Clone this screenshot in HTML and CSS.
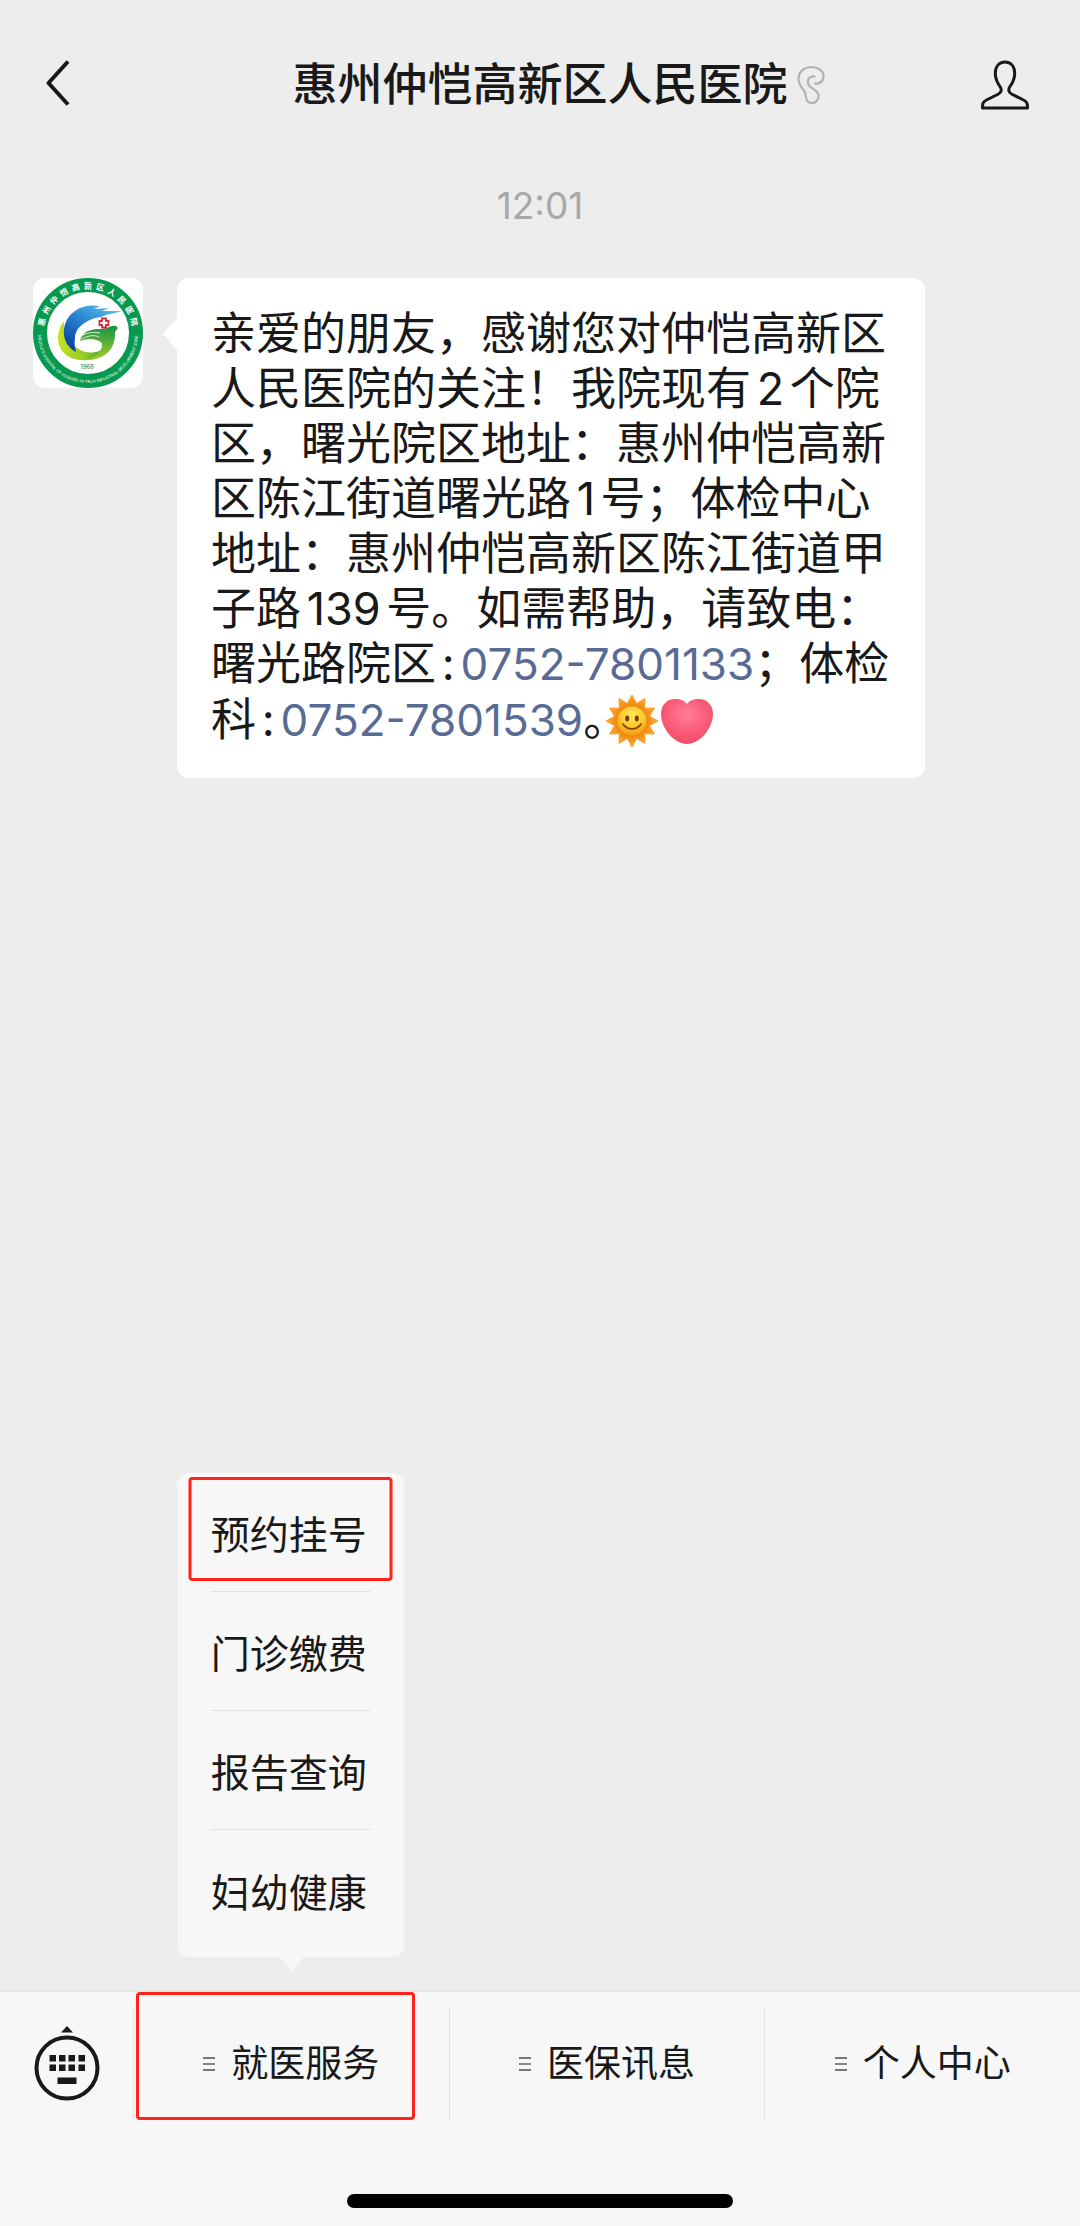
FILE: index.html
```
<!DOCTYPE html>
<html lang="zh-CN">
<head>
    <meta charset="UTF-8">
    <meta name="viewport" content="width=device-width, initial-scale=1.0">
    <title>惠州仲恺高新区人民医院</title>
    <link rel="stylesheet" href="styles.css">
</head>
<body>

<header class="header">
    <div class="header-left">
        <button class="icon-btn" aria-label="返回">
            <svg width="24" height="48" viewBox="0 0 24 48" fill="none" stroke="#191919" stroke-width="4">
                <path d="M22 2.500L2.500 24L22 45.500" stroke-linejoin="round"/>
            </svg>
        </button>
    </div>
    <h1 class="title">惠州仲恺高新区人民医院</h1>
    <div class="header-right">
        <svg width="28" height="40" viewBox="0 0 28 40" fill="none" stroke="#b2b2b2" stroke-width="2.200" stroke-linecap="round">
            <path d="M18 18.500C22 19 26.500 17 26.500 11.500C26.500 5 20.500 2 14.500 2C7 2 1.500 7 1.500 14C1.500 20 5.500 23 7.500 26.500C9.500 30.500 8 38 14.500 38C19.500 38 22 34 21.500 30C21 25 13.500 24 11.500 19.500C9.500 15 12.500 10.500 17.500 11.500"/>
        </svg>
        <button class="icon-btn" aria-label="账号主页">
            <svg width="50" height="50" viewBox="0 0 50 50" fill="none" stroke="#191919" stroke-width="3" stroke-linejoin="round">
                <path d="M25 2C18.500 2 15.300 7 15.300 13.500C15.300 19 17.500 23 20 26.500C22 29.500 21.500 32.500 18.500 34L6.500 40C3 41.800 2.500 43.500 2.500 48L47.500 48C47.500 43.500 47 41.800 43.500 40L31.500 34C28.500 32.500 28 29.500 30 26.500C32.500 23 34.700 19 34.700 13.500C34.700 7 31.500 2 25 2Z"/>
            </svg>
        </button>
    </div>
</header>

<main class="chat">
    <time class="time">12:01</time>

    <div class="message">
        <svg class="avatar" viewBox="0 0 110 110" role="img" aria-label="惠州仲恺高新区人民医院">
            <defs>
                <linearGradient id="blue" x1="1" y1="0" x2="0.200" y2="1">
                    <stop offset="0" stop-color="#6cc8ee"/>
                    <stop offset="0.450" stop-color="#2f8fd6"/>
                    <stop offset="1" stop-color="#0b3fa0"/>
                </linearGradient>
                <linearGradient id="green" x1="0" y1="0" x2="1" y2="0">
                    <stop offset="0" stop-color="#c9e021"/>
                    <stop offset="0.550" stop-color="#8fc928"/>
                    <stop offset="1" stop-color="#2f9a3a"/>
                </linearGradient>
                <linearGradient id="dove" x1="0" y1="0" x2="0" y2="1">
                    <stop offset="0" stop-color="#149447"/>
                    <stop offset="1" stop-color="#a4cf25"/>
                </linearGradient>
                <path id="arcTop" d="M11.400 64A44.500 44.500 0 1 1 98.600 64"/>
                <path id="arcBottom" d="M5 55A50 50 0 0 0 105 55"/>
            </defs>
            <rect width="110" height="110" fill="#fff"/>
            <circle cx="55" cy="55" r="48" fill="#fff" stroke="#079a4f" stroke-width="14"/>
            <text class="logo-name"><textPath href="#arcTop" startOffset="50%">惠&#160;&#160;州&#160;&#160;仲&#160;&#160;恺&#160;&#160;高&#160;&#160;新&#160;&#160;区&#160;&#160;人&#160;&#160;民&#160;&#160;医&#160;&#160;院</textPath></text>
            <text class="logo-en"><textPath href="#arcBottom" startOffset="50%">PEOPLE'S HOSPITAL OF HUIZHOU HI-TECH INDUSTRIAL DEVELOPMENT ZONE</textPath></text>
            <path d="M31 43C21 56 23 75 41 81C56 85 70 80 75 68C66 76 52 77 43 69C34 61 30 52 31 43Z" fill="url(#green)"/>
            <path d="M43 74C27 66 27 43 42 33C50 27 60 27 67 28L61 31L76 30L69 33L89 33C80 36 74 36 68 39C53 41 42 50 42 60C41 66 42 70 43 74Z" fill="url(#blue)"/>
            <path d="M47 63C50 53 57 51 68 51C75 51 77 47 83 48L85 50L82 54C83 67 76 80 57 82C64 77 70 72 69 65C63 60 55 60 47 63Z" fill="url(#dove)"/>
            <path d="M48 58C55 54 62 54 67 55M49 61C56 57 62 57 66 59" fill="none" stroke="#fff" stroke-width="0.800"/>
            <path d="M69 40.500H73V43H75.500V47H73V49.500H69V47H66.500V43H69Z" fill="#fff" stroke="#d22b3c" stroke-width="1.800"/>
            <text class="logo-year" x="54" y="91">1968</text>
        </svg>
        <div class="bubble">
            亲爱的朋友，感谢您对仲恺高新区<br>
            人民医院的关注！我院现有2个院<br>
            区，曙光院区地址：惠州仲恺高新<br>
            区陈江街道曙光路1号；体检中心<br>
            地址：惠州仲恺高新区陈江街道甲<br>
            子路139号。如需帮助，请致电：<br>
            曙光路院区:<a href="tel:0752-7801133">0752-7801133</a>；体检<br>
            科:<a href="tel:0752-7801539">0752-7801539</a><span class="half">。</span><svg class="emoji" viewBox="-26 -26 52 52" role="img" aria-label="太阳">
                <defs>
                    <radialGradient id="rays">
                        <stop offset="0.600" stop-color="#f08a12"/>
                        <stop offset="1" stop-color="#fbb03a"/>
                    </radialGradient>
                    <radialGradient id="face" cx="0.500" cy="0.300" r="0.700">
                        <stop offset="0" stop-color="#ffe957"/>
                        <stop offset="0.600" stop-color="#fdc62c"/>
                        <stop offset="1" stop-color="#f39a16"/>
                    </radialGradient>
                </defs>
                <path d="M0 -26L4.700 -17.400L13 -22.500L12.700 -12.700L22.500 -13L17.400 -4.700L26 0L17.400 4.700L22.500 13L12.700 12.700L13 22.500L4.700 17.400L0 26L-4.700 17.400L-13 22.500L-12.700 12.700L-22.500 13L-17.400 4.700L-26 0L-17.400 -4.700L-22.500 -13L-12.700 -12.700L-13 -22.500L-4.700 -17.400Z" fill="url(#rays)" stroke="#f7a02c" stroke-linejoin="round"/>
                <circle r="14.500" fill="url(#face)"/>
                <ellipse cx="-4.800" cy="-2.500" rx="2" ry="3" fill="#7a3b06"/>
                <ellipse cx="4.800" cy="-2.500" rx="2" ry="3" fill="#7a3b06"/>
                <path d="M-9 3C-5 9.500 5 9.500 9 3" fill="none" stroke="#8a4506" stroke-width="1.800" stroke-linecap="round"/>
            </svg><svg class="emoji" viewBox="0 0 52 52" role="img" aria-label="爱心">
                <defs>
                    <radialGradient id="heart" cx="0.500" cy="0.350" r="0.700">
                        <stop offset="0" stop-color="#ff7e9c"/>
                        <stop offset="0.500" stop-color="#fb5f7c"/>
                        <stop offset="1" stop-color="#f0475f"/>
                    </radialGradient>
                </defs>
                <path d="M26 9C22 4 17 4 14 4C6 4 0 10 0 19C0 34 14 49 26 49C38 49 52 34 52 19C52 10 46 4 38 4C35 4 30 4 26 9Z" fill="url(#heart)"/>
            </svg>
        </div>
    </div>
</main>

<footer class="footer">
    <nav class="tabs">
        <button class="keyboard" aria-label="切换到键盘">
            <svg width="66" height="76" viewBox="0 0 66 76" fill="#191919">
                <path d="M33 0L39 6.500H27Z"/>
                <circle cx="33" cy="42" r="30.500" fill="none" stroke="#191919" stroke-width="4"/>
                <path d="M15.500 29h6.500v6.500h-6.500zM25 29h6.500v6.500h-6.500zM34.500 29h6.500v6.500h-6.500zM44.500 29h6.500v6.500h-6.500zM15.500 38.500h6.500v6.500h-6.500zM25 38.500h6.500v6.500h-6.500zM34.500 38.500h6.500v6.500h-6.500zM44.500 38.500h6.500v6.500h-6.500zM23.500 51.500h19v6.500h-19z"/>
            </svg>
        </button>
        <div class="tab marked">
            <button class="tab-btn"><span class="bars"></span>就医服务</button>
            <div class="menu">
                <button class="menu-item marked">预约挂号</button>
                <button class="menu-item">门诊缴费</button>
                <button class="menu-item">报告查询</button>
                <button class="menu-item">妇幼健康</button>
            </div>
        </div>
        <div class="tab">
            <button class="tab-btn"><span class="bars"></span>医保讯息</button>
        </div>
        <div class="tab">
            <button class="tab-btn"><span class="bars"></span>个人中心</button>
        </div>
    </nav>
    <div class="home-bar"></div>
</footer>

</body>
</html>
```
FILE: styles.css
```
* {
    box-sizing: border-box;
}
body {
    margin: 0;
    min-height: 100vh;
    display: flex;
    flex-direction: column;
    background: #ededed;
    color: #191919;
    font-family: Inter, "Noto Sans CJK SC", sans-serif;
}
button {
    margin: 0;
    padding: 0;
    border: 0;
    background: none;
    color: inherit;
    font-family: inherit;
}
svg {
    display: block;
}

/* header */
.header {
    display: grid;
    grid-template-columns: 1fr auto 1fr;
    align-items: center;
    height: 170px;
}
.header-left {
    padding-left: 46px;
}
.header-right {
    display: flex;
    align-items: center;
    justify-content: space-between;
    padding: 0 50px 0 9px;
}
.title {
    margin: 0;
    font-size: 45px;
    font-weight: 500;
    line-height: 60px;
}

/* messages */
.chat {
    flex: 1;
}
.time {
    display: block;
    margin-top: 8px;
    color: #a8a8a8;
    font-size: 37px;
    line-height: 56px;
    text-align: center;
}
.message {
    display: flex;
    align-items: flex-start;
    gap: 34px;
    padding: 44px 33px;
}
.avatar {
    flex: none;
    width: 110px;
    height: 110px;
    border-radius: 12px;
}
.logo-name {
    fill: #fff;
    font-size: 8px;
    font-weight: bold;
    text-anchor: middle;
}
.logo-en {
    fill: #fff;
    font-size: 4px;
    text-anchor: middle;
}
.logo-year {
    fill: #0a7a45;
    font-size: 6px;
    text-anchor: middle;
}
.bubble {
    position: relative;
    width: 748px;
    padding: 28px 20px 30px 34px;
    border-radius: 12px;
    background: #fff;
    font-size: 45px;
    line-height: 55px;
    text-autospace: normal;
}
.bubble::before {
    content: "";
    position: absolute;
    left: -14px;
    top: 40px;
    border: 16px solid transparent;
    border-left: 0;
    border-right: 14px solid #fff;
}
.bubble a {
    margin-left: 6px;
    color: #576b95;
    font-size: 44px;
    text-decoration: none;
}
.half {
    font-feature-settings: "halt";
}
.emoji {
    display: inline-block;
    width: 52px;
    height: 52px;
    margin: -12px 3px -6px 0;
    vertical-align: middle;
}

/* bottom tabs */
.footer {
    border-top: 2px solid #e6e6e6;
    background: #f7f7f7;
}
.tabs {
    display: flex;
    padding: 16px 0;
}
.keyboard {
    flex: none;
    width: 133px;
    display: flex;
    align-items: center;
    justify-content: center;
}
.tab {
    position: relative;
    flex: 1;
    height: 112px;
    border-left: 1px solid #e2e2e2;
}
.tab-btn {
    width: 100%;
    height: 100%;
    display: flex;
    align-items: center;
    justify-content: center;
    gap: 16px;
    font-size: 37px;
    line-height: 56px;
}
.bars {
    width: 12px;
    height: 14px;
    border: solid #777;
    border-width: 2px 0;
    background: linear-gradient(#888, #888) center / 100% 2px no-repeat;
}
.menu {
    position: absolute;
    bottom: 100%;
    left: 50%;
    transform: translateX(-50%);
    margin-bottom: 51px;
    padding: 0 34px 8px 33px;
    border-radius: 12px;
    background: #f7f7f7;
}
.menu::after {
    content: "";
    position: absolute;
    top: 100%;
    left: 50%;
    margin-left: -12px;
    border: 12px solid transparent;
    border-top: 14px solid #f7f7f7;
    border-bottom: 0;
}
.menu-item {
    position: relative;
    display: block;
    min-width: 160px;
    height: 119px;
    padding-top: 6px;
    border-bottom: 1px solid #e2e2e2;
    font-size: 39px;
    line-height: 56px;
    text-align: left;
    white-space: nowrap;
}
.menu-item:last-child {
    border-bottom: 0;
}

/* red frames */
.marked::before {
    content: "";
    position: absolute;
    border: 3px solid #ff2419;
    border-radius: 4px;
    pointer-events: none;
}
.tab.marked::before {
    inset: -16px 34px 0 2px;
}
.menu-item.marked::before {
    inset: 4px -22px 10px;
}
.home-bar {
    width: 386px;
    height: 14px;
    margin: 58px auto 18px;
    border-radius: 7px;
    background: #000;
}
```
